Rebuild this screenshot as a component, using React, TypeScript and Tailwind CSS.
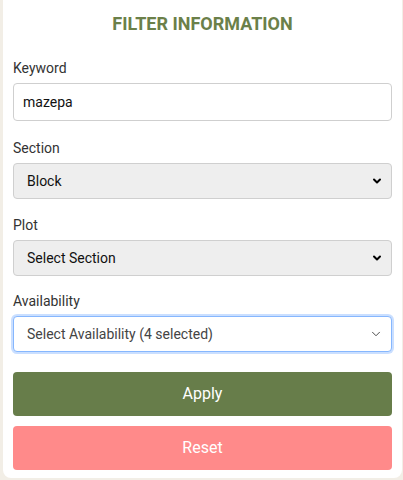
import { ChevronDown } from "lucide-react";

function Field({ label, children, className = "" }: { label: string; children: React.ReactNode; className?: string }) {
  return (
    <div className={className}>
      <label className="mb-[5px] block text-[14px] leading-5 text-[#333]">{label}</label>
      {children}
    </div>
  );
}

function FakeSelect({ value, focused = false }: { value: string; focused?: boolean }) {
  if (focused) {
    return (
      <div className="flex h-[36px] items-center justify-between rounded-[4px] border border-[#86b7fe] bg-white pl-[13px] pr-[8px] text-[14px] text-[#444] shadow-[0_0_0_2px_rgba(13,110,253,0.22)]">
        <span>{value}</span>
        <ChevronDown className="h-[14px] w-[14px] text-[#333]" strokeWidth={1.5} />
      </div>
    );
  }
  return (
    <div className="flex h-[36px] items-center justify-between rounded-[4px] border border-[#cfcfcf] bg-[#eeeeee] pl-[13px] pr-[8px] text-[14px] text-[#111]">
      <span>{value}</span>
      <ChevronDown className="h-[12px] w-[12px] text-black" strokeWidth={4} />
    </div>
  );
}

export default function App() {
  return (
    <div className="h-[480px] w-[403px] overflow-hidden bg-[#f2eee6] font-['Roboto',sans-serif]">
      <div className="ml-[3px] h-[478px] w-[399px] rounded-b-[8px] bg-white px-[10px] pt-[10px]">
        <h2 className="mb-[20px] text-center text-[18px] font-bold leading-7 text-[#6b8049]">FILTER INFORMATION</h2>

        <Field label="Keyword" className="mb-[17px]">
          <input
            type="text"
            defaultValue="mazepa"
            className="h-[38px] w-full rounded-[4px] border border-[#cfcfcf] px-[9px] text-[14px] text-[#111] outline-none"
          />
        </Field>

        <Field label="Section" className="mb-[16px]">
          <FakeSelect value="Block" />
        </Field>

        <Field label="Plot" className="mb-[15px]">
          <FakeSelect value="Select Section" />
        </Field>

        <Field label="Availability" className="mb-[20px]">
          <FakeSelect value="Select Availability (4 selected)" focused />
        </Field>

        <button type="button" className="mb-[10px] block h-[44px] w-full rounded-[4px] bg-[#677d4a] text-[16px] text-white">
          Apply
        </button>
        <button type="button" className="block h-[44px] w-full rounded-[4px] bg-[#ff8a8a] text-[16px] text-white">
          Reset
        </button>
      </div>
    </div>
  );
}
